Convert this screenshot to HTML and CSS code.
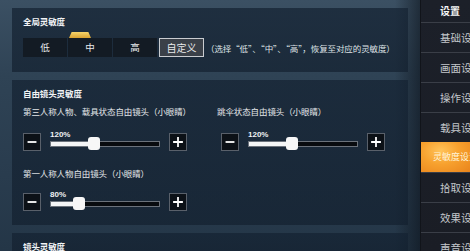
FILE: index.html
```html
<!DOCTYPE html>
<html lang="zh">
<head>
<meta charset="utf-8">
<link rel="stylesheet" href="styles.css">
</head>
<body>
<div class="screen">
  <div class="main">
    <section class="panel panel-global">
      <div class="title">全局灵敏度</div>
      <div class="preset-row">
        <div class="presets">
          <div class="preset">低</div>
          <div class="preset preset-rec"><span class="badge"></span>中</div>
          <div class="preset">高</div>
          <div class="preset preset-active">自定义</div>
        </div>
        <div class="note">（选择“低”、“中”、“高”，恢复至对应的灵敏度）</div>
      </div>
    </section>

    <section class="panel panel-free">
      <div class="title">自由镜头灵敏度</div>
      <div class="grid">
        <div class="cell">
          <div class="label">第三人称人物、载具状态自由镜头（小眼睛）</div>
          <div class="slider">
            <div class="step"><svg viewBox="0 0 18 18"><path d="M4 9h10" stroke="#fff" stroke-width="2"/></svg></div>
            <div class="track-wrap">
              <div class="pct">120%</div>
              <div class="track"><div class="fill" style="width:40%"></div><div class="thumb" style="left:40%"></div></div>
            </div>
            <div class="step"><svg viewBox="0 0 18 18"><path d="M3.5 9h11M9 3.5v11" stroke="#fff" stroke-width="2"/></svg></div>
          </div>
        </div>
        <div class="cell cell-right">
          <div class="label">跳伞状态自由镜头（小眼睛）</div>
          <div class="slider">
            <div class="step"><svg viewBox="0 0 18 18"><path d="M4 9h10" stroke="#fff" stroke-width="2"/></svg></div>
            <div class="track-wrap">
              <div class="pct">120%</div>
              <div class="track"><div class="fill" style="width:40%"></div><div class="thumb" style="left:40%"></div></div>
            </div>
            <div class="step"><svg viewBox="0 0 18 18"><path d="M3.5 9h11M9 3.5v11" stroke="#fff" stroke-width="2"/></svg></div>
          </div>
        </div>
        <div class="cell cell-row2">
          <div class="label">第一人称人物自由镜头（小眼睛）</div>
          <div class="slider">
            <div class="step"><svg viewBox="0 0 18 18"><path d="M4 9h10" stroke="#fff" stroke-width="2"/></svg></div>
            <div class="track-wrap">
              <div class="pct">80%</div>
              <div class="track"><div class="fill" style="width:26%"></div><div class="thumb" style="left:26%"></div></div>
            </div>
            <div class="step"><svg viewBox="0 0 18 18"><path d="M3.5 9h11M9 3.5v11" stroke="#fff" stroke-width="2"/></svg></div>
          </div>
        </div>
      </div>
    </section>

    <section class="panel panel-lens">
      <div class="title">镜头灵敏度</div>
    </section>
  </div>

  <nav class="side">
    <div class="side-head">设置</div>
    <div class="side-item">基础设置</div>
    <div class="side-item">画面设置</div>
    <div class="side-item">操作设置</div>
    <div class="side-item">载具设置</div>
    <div class="side-item side-active">灵敏度设置</div>
    <div class="side-item">拾取设置</div>
    <div class="side-item">效果设置</div>
    <div class="side-item">声音设置</div>
  </nav>
</div>
</body>
</html>
```

FILE: styles.css
```css
* { box-sizing: border-box; }
html, body { margin: 0; padding: 0; }
body {
  width: 470px;
  height: 251px;
  overflow: hidden;
  background: #2b3e4f;
  font-family: "Noto Sans CJK SC", "Noto Sans", sans-serif;
  color: #e6e9ec;
}
.screen {
  display: flex;
  width: 470px;
  height: 251px;
  overflow: hidden;
  background: linear-gradient(180deg, #3b5063 0%, #2f4355 30%, #293c4e 70%, #243647 100%);
}
.main {
  width: 420px;
  padding: 8px 12px 0 12px;
  display: flex;
  flex-direction: column;
  gap: 8px;
  overflow: hidden;
  background: linear-gradient(90deg, rgba(0,0,0,0) 0%, rgba(0,0,0,0) 94%, rgba(10,16,24,0.55) 100%);
}
.panel {
  background: linear-gradient(180deg, rgba(20,34,50,0.72), rgba(18,31,46,0.68));
  padding: 7px 11px 0 11px;
  flex-shrink: 0;
}
.panel-global { height: 64px; }
.panel-free { height: 145px; }
.panel-lens { height: 19px; }
.title {
  font-size: 8.5px;
  line-height: 12px;
  color: #f2f4f6;
  font-weight: 700;
  letter-spacing: -0.1px;
}
.preset-row {
  display: flex;
  align-items: center;
  margin-top: 11px;
}
.presets {
  display: flex;
  gap: 1px;
}
.preset {
  position: relative;
  width: 44px;
  height: 19px;
  background: #131b24;
  color: #e8eaec;
  font-size: 9.5px;
  line-height: 19px;
  text-align: center;
}
.preset-active {
  margin-left: 1px;
  background: #3a4048;
  border: 1px solid #c9ccd0;
  line-height: 17px;
  width: 45px;
  font-size: 10px;
}
.badge {
  position: absolute;
  left: 1px;
  top: -6px;
  width: 22px;
  height: 6px;
  background: linear-gradient(180deg, #f6d46a, #d9a231);
  clip-path: polygon(12% 0, 88% 0, 100% 100%, 0 100%);
}
.note {
  margin-left: 2px;
  font-size: 8.5px;
  color: #dfe3e6;
  white-space: nowrap;
  letter-spacing: -0.1px;
}
.grid {
  display: grid;
  grid-template-columns: 194px 180px;
  column-gap: 0;
  row-gap: 16px;
  margin-top: 6px;
}
.cell-right .slider { margin-left: 4px; }
.cell-row2 .slider { margin-top: 14px; }
.label {
  font-size: 8.5px;
  line-height: 12px;
  color: #e4e7ea;
  white-space: nowrap;
  letter-spacing: -0.1px;
}
.slider {
  display: flex;
  align-items: flex-end;
  gap: 9px;
  margin-top: 16px;
  height: 18px;
}
.step {
  width: 18px;
  height: 18px;
  background: #0c1117;
  border: 1px solid #59606a;
  flex-shrink: 0;
}
.step svg { display: block; width: 16px; height: 16px; }
.track-wrap {
  width: 110px;
  height: 18px;
  display: flex;
  flex-direction: column;
}
.pct {
  font-family: "Liberation Sans", Arial, sans-serif;
  font-size: 8px;
  line-height: 9px;
  color: #f0f2f4;
  font-weight: 700;
  margin-top: -3px;
}
.track {
  position: relative;
  margin-top: 2px;
  height: 6px;
  background: #080b0f;
  border: 1px solid #6b727b;
}
.fill {
  height: 100%;
  background: #f4f5f6;
}
.thumb {
  position: absolute;
  top: -5px;
  width: 12px;
  height: 13px;
  margin-left: -6px;
  background: #f7f7f7;
  border-radius: 3px;
}
.side {
  width: 50px;
  background: linear-gradient(180deg, #1c2029, #1a1d25);
  display: flex;
  flex-direction: column;
  overflow: hidden;
  border-left: 1px solid #11141a;
}
.side-head {
  height: 22px;
  line-height: 22px;
  padding-left: 19px;
  font-size: 10px;
  font-weight: 700;
  color: #f4f5f6;
  white-space: nowrap;
}
.side-item {
  height: 30px;
  line-height: 29px;
  padding-left: 19px;
  border-top: 1px solid #3a3e47;
  font-size: 10.5px;
  color: #c4c8cc;
  white-space: nowrap;
  flex-shrink: 0;
}
.side-active {
  background: radial-gradient(ellipse at 40% 30%, #ffc35a 0%, #f7a12e 45%, #e9841c 100%);
  color: #fff3d6;
  font-size: 9px;
  border-top: none;
  padding-left: 12px;
}
```
